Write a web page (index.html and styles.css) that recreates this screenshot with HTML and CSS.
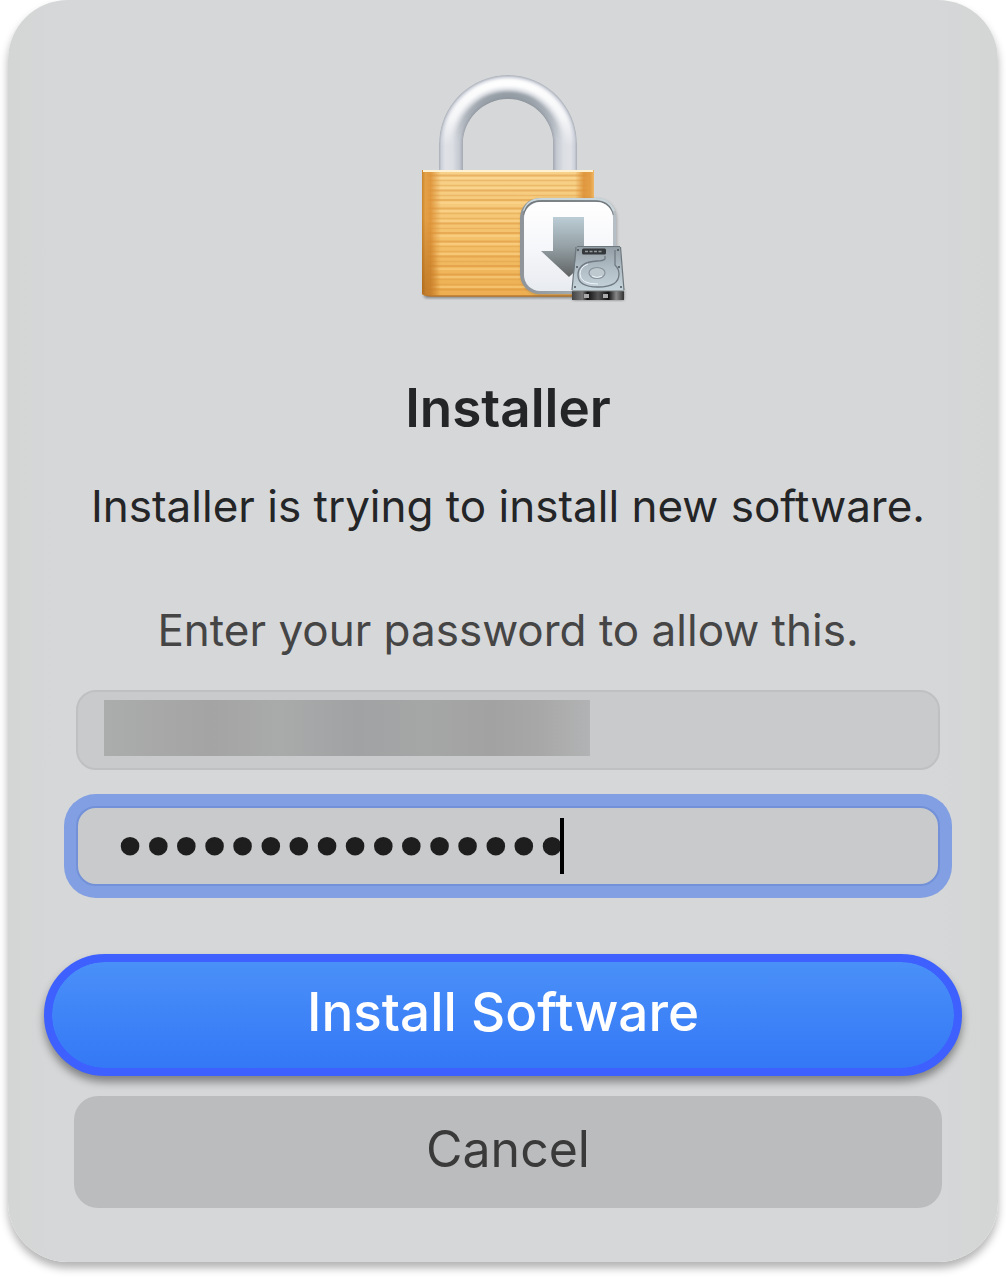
FILE: index.html
```html
<!DOCTYPE html>
<html lang="en">
<head>
  <meta charset="UTF-8">
  <meta name="viewport" content="width=device-width, initial-scale=1.0">
  <title>Installer</title>
  <link rel="stylesheet" href="styles.css">
</head>
<body>
  <form class="dialog">
    <div class="dialog-header">
      <svg class="lock-icon" viewBox="383 60 250 250" aria-hidden="true">
        <defs>
          <radialGradient id="arch" gradientUnits="userSpaceOnUse" cx="508" cy="144" r="69">
            <stop offset="0.652" stop-color="#a4a9b1"/>
            <stop offset="0.7" stop-color="#c3c8d0"/>
            <stop offset="0.8" stop-color="#dbdee3"/>
            <stop offset="0.91" stop-color="#dfe1e7"/>
            <stop offset="0.965" stop-color="#cdd1da"/>
            <stop offset="1" stop-color="#a9aeb7"/>
          </radialGradient>
          <linearGradient id="leg-left" x1="1" x2="0">
            <stop offset="0" stop-color="#a4a9b1"/>
            <stop offset="0.14" stop-color="#c3c8d0"/>
            <stop offset="0.43" stop-color="#dbdee3"/>
            <stop offset="0.74" stop-color="#dfe1e7"/>
            <stop offset="0.9" stop-color="#cdd1da"/>
            <stop offset="1" stop-color="#a9aeb7"/>
          </linearGradient>
          <linearGradient id="leg-right">
            <stop offset="0" stop-color="#a4a9b1"/>
            <stop offset="0.14" stop-color="#c3c8d0"/>
            <stop offset="0.43" stop-color="#dbdee3"/>
            <stop offset="0.74" stop-color="#dfe1e7"/>
            <stop offset="0.9" stop-color="#cdd1da"/>
            <stop offset="1" stop-color="#a9aeb7"/>
          </linearGradient>
          <linearGradient id="arch-shade" gradientUnits="userSpaceOnUse" x1="0" y1="92" x2="0" y2="140">
            <stop offset="0" stop-color="#7f8890" stop-opacity="0.75"/>
            <stop offset="1" stop-color="#7f8890" stop-opacity="0"/>
          </linearGradient>
          <linearGradient id="arch-shine" gradientUnits="userSpaceOnUse" x1="0" y1="78" x2="0" y2="146">
            <stop offset="0" stop-color="#fff"/>
            <stop offset="0.6" stop-color="#fff" stop-opacity="0.7"/>
            <stop offset="1" stop-color="#fff" stop-opacity="0"/>
          </linearGradient>
          <clipPath id="shackle">
            <path d="M439 170v-26a69 69 0 0 1 138 0v26h-24v-26a45 45 0 0 0-90 0v26z"/>
          </clipPath>
          <linearGradient id="brass" x1="0" y1="0" x2="0" y2="1">
            <stop offset="0" stop-color="#f7d28b"/>
            <stop offset="0.5" stop-color="#f5c36e"/>
            <stop offset="1" stop-color="#edae50"/>
          </linearGradient>
          <linearGradient id="brass-edge">
            <stop offset="0" stop-color="#c9842c"/>
            <stop offset="0.02" stop-color="#e4a047"/>
            <stop offset="0.05" stop-color="#dc8f34" stop-opacity="0.85"/>
            <stop offset="0.11" stop-color="#dc8f34" stop-opacity="0"/>
            <stop offset="0.89" stop-color="#dc8f34" stop-opacity="0"/>
            <stop offset="0.94" stop-color="#dc8f34" stop-opacity="0.85"/>
            <stop offset="0.98" stop-color="#e4a047"/>
            <stop offset="1" stop-color="#efb869"/>
          </linearGradient>
          <radialGradient id="brass-dark" gradientUnits="userSpaceOnUse" cx="0" cy="0" r="1" gradientTransform="translate(422 296) scale(18 80)">
            <stop offset="0" stop-color="#a05a10" stop-opacity="0.6"/>
            <stop offset="1" stop-color="#a05a10" stop-opacity="0"/>
          </radialGradient>
          <pattern id="brushed" patternUnits="userSpaceOnUse" x="0" y="172" width="200" height="33">
            <path d="M0 3.500H200M0 18.500H200M0 28H200" stroke="#d78f36" stroke-opacity="0.45" stroke-width="2"/>
            <path d="M0 8.500H200M0 13.500H200M0 23.500H200" stroke="#dd9840" stroke-opacity="0.4" stroke-width="1.500"/>
            <path d="M0 6H200M0 16H200M0 31H200" stroke="#ffe0a0" stroke-opacity="0.45" stroke-width="1.500"/>
          </pattern>
          <linearGradient id="tile" x1="0" y1="0" x2="0" y2="1">
            <stop offset="0" stop-color="#fff"/>
            <stop offset="0.5" stop-color="#f6f7fa"/>
            <stop offset="1" stop-color="#e8ebf0"/>
          </linearGradient>
          <linearGradient id="tile-rim" x1="0" y1="0" x2="1" y2="0">
            <stop offset="0" stop-color="#8e9499"/>
            <stop offset="0.5" stop-color="#a0a8ad"/>
            <stop offset="1" stop-color="#b5bfc5"/>
          </linearGradient>
          <linearGradient id="arrow" x1="0" y1="0" x2="0" y2="1">
            <stop offset="0" stop-color="#bccdd5"/>
            <stop offset="0.5" stop-color="#94a0a5"/>
            <stop offset="1" stop-color="#5f6262"/>
          </linearGradient>
          <linearGradient id="plate" x1="0" y1="0" x2="0" y2="1">
            <stop offset="0" stop-color="#919ba2"/>
            <stop offset="0.4" stop-color="#b0bcc4"/>
            <stop offset="1" stop-color="#cfdee6"/>
          </linearGradient>
          <linearGradient id="drive-front">
            <stop offset="0" stop-color="#444"/>
            <stop offset="0.2" stop-color="#777"/>
            <stop offset="0.3" stop-color="#111"/>
            <stop offset="0.5" stop-color="#555"/>
            <stop offset="0.7" stop-color="#111"/>
            <stop offset="0.85" stop-color="#888"/>
            <stop offset="1" stop-color="#333"/>
          </linearGradient>
          <filter id="soft" x="-20%" y="-20%" width="140%" height="140%">
            <feGaussianBlur stdDeviation="1.500"/>
          </filter>
        </defs>

        <!-- shackle -->
        <g clip-path="url(#shackle)">
          <path d="M439 144a69 69 0 0 1 138 0h-24a45 45 0 0 0-90 0z" fill="url(#arch)"/>
          <rect x="439" y="143" width="24" height="27" fill="url(#leg-left)"/>
          <rect x="553" y="143" width="24" height="27" fill="url(#leg-right)"/>
          <path d="M460 144a48 48 0 0 1 96 0" fill="none" stroke="url(#arch-shade)" stroke-width="9" filter="url(#soft)"/>
          <path d="M447 144a61 61 0 0 1 122 0" fill="none" stroke="url(#arch-shine)" stroke-width="9" filter="url(#soft)"/>
        </g>

        <!-- body -->
        <rect x="424" y="290" width="170" height="8" rx="3" fill="#555" opacity="0.7" filter="url(#soft)"/>
        <path d="M422 170h172v123q0 3-6 3H430q-8 0-8-3z" fill="url(#brass)"/>
        <path d="M422 173h172v120H422z" fill="url(#brushed)"/>
        <path d="M422 170h172v123q0 3-6 3H430q-8 0-8-3z" fill="url(#brass-edge)"/>
        <path d="M422 210h20v86h-12q-8 0-8-3z" fill="url(#brass-dark)"/>
        <path d="M423 294q3 2 8 2h157q4 0 6-2" fill="none" stroke="#b97a2d" stroke-width="1.500"/>
        <path d="M423 171h170" stroke="#fff2d2" stroke-width="2"/>

        <!-- installer badge -->
        <rect x="521" y="199" width="96" height="96" rx="20" fill="#555" opacity="0.35" filter="url(#soft)"/>
        <rect x="520" y="198" width="96" height="96" rx="20" fill="url(#tile-rim)"/>
        <path d="M524 211q4-12 17-12h55q13 0 18 12" fill="none" stroke="#c9d6dc" stroke-width="2"/>
        <path d="M524 215q2-14 17-14h54q15 0 18 14" fill="none" stroke="#72797d" stroke-width="1.500"/>
        <rect x="524" y="202" width="89" height="89" rx="16" fill="url(#tile)"/>
        <path d="M553 217h31v34h12l-27 26-28-26h12z" fill="url(#arrow)"/>

        <!-- drive -->
        <path d="M573 290h51v10h-51z" fill="#333" opacity="0.6" filter="url(#soft)"/>
        <path d="M577 246h43l4 44v10h-52v-10z" fill="url(#plate)"/>
        <path d="M577 246.500h43M576 247l-4 43M620.500 247l3.500 43" fill="none" stroke="#6d777e" stroke-width="1.200"/>
        <path d="M572 291h52v9h-52z" fill="url(#drive-front)"/>
        <path d="M572 291h52" stroke="#75797b"/>
        <path d="M584 294h5v4h-5zM603 294h5v4h-5z" fill="#aaa"/>
        <rect x="582" y="248.500" width="24" height="6" rx="1.500" fill="#34383a"/>
        <path d="M585 251.500h17" stroke="#929a9e" stroke-width="1.500" stroke-dasharray="3 1.500"/>
        <path d="M605 256v3q-2 2-8 2-19 1-19 14 0 12 20 12 21 0 21-13 0-5-4-9V250" fill="none" stroke="#707a82" stroke-width="1.300"/>
        <path d="M588 264q-8 3-8 10 0 10 18 10" fill="none" stroke="#edf5fa" stroke-width="1"/>
        <ellipse cx="597" cy="273" rx="8" ry="5.500" fill="#bdc8cf" stroke="#87929a" stroke-width="1.200"/>
        <path d="M592 276q5 3 10 0" fill="none" stroke="#eaf2f6"/>
        <g fill="#4b5358">
          <circle cx="578" cy="250" r="1"/>
          <circle cx="618" cy="250" r="1"/>
          <circle cx="577" cy="267" r="1"/>
          <circle cx="619" cy="267" r="1"/>
          <circle cx="575" cy="287" r="1"/>
          <circle cx="621" cy="287" r="1"/>
        </g>
      </svg>
      <h1 class="dialog-title">Installer</h1>
      <p class="dialog-message">Installer is trying to install new software.</p>
      <p class="dialog-hint">Enter your password to allow this.</p>
    </div>

    <div class="fields">
      <div class="field">
        <input class="field-input" type="text" aria-label="User name" readonly>
        <span class="redacted"></span>
      </div>
      <div class="field">
        <input class="field-input field-input-active" type="password" aria-label="Password" value="abcdefghijklmnop">
        <span class="caret"></span>
      </div>
    </div>

    <div class="actions">
      <button class="button button-primary" type="submit">Install Software</button>
      <button class="button button-secondary" type="button">Cancel</button>
    </div>
  </form>
</body>
</html>
```
FILE: styles.css
```css
:root {
  --dialog-bg: #d6d7d9;
  --field-bg: #c9cacb;
  --field-border: #bfc0c1;
  --focus-ring: #819fe2;
  --focus-border: #7391d8;
  --primary-border: #3e60ff;
  --text: #242527;
  --text-muted: #454545;
}

* {
  box-sizing: border-box;
  margin: 0;
  padding: 0;
}

body {
  font-family: Inter, "Liberation Sans", sans-serif;
  background-color: #fff;
  color: var(--text);
}

.dialog {
  margin: 0 8px 16px;
  padding: 60px 36px 54px;
  border-radius: 60px;
  background: linear-gradient(90deg, #d4d6d5, var(--dialog-bg) 6%, var(--dialog-bg) 92%, #d4d6d5);
  box-shadow: 0 6px 8px rgba(0, 0, 0, 0.3);
}

.dialog-header {
  display: flex;
  flex-direction: column;
  align-items: center;
  padding: 0 20px 0 30px;
  text-align: center;
}

.lock-icon {
  width: 250px;
  height: 250px;
}

.dialog-title {
  margin-top: 66px;
  font-size: 53px;
  font-weight: 600;
  line-height: 64px;
}

.dialog-message,
.dialog-hint {
  font-size: 44px;
  line-height: 56px;
}

.dialog-message {
  margin-top: 38px;
}

.dialog-hint {
  margin-top: 68px;
  color: var(--text-muted);
}

.fields {
  display: flex;
  flex-direction: column;
  gap: 36px;
  margin: 32px 22px 0 32px;
}

.field {
  position: relative;
}

.field-input {
  display: block;
  width: 100%;
  height: 80px;
  padding: 0 36px 6px;
  border: 2px solid var(--field-border);
  border-radius: 20px;
  outline: none;
  background-color: var(--field-bg);
  color: #1e1e1e;
  font-family: inherit;
  font-size: 50px;
}

.field-input-active {
  padding-left: 38px;
  border-color: var(--focus-border);
  box-shadow: 0 0 0 12px var(--focus-ring);
  /* heavier password dots */
  -webkit-text-stroke: 3px #1e1e1e;
}

.redacted {
  position: absolute;
  top: 10px;
  left: 28px;
  width: 486px;
  height: 56px;
  background: linear-gradient(90deg, #abacac, #a4a4a4 22%, #a9aaaa 36%, #a1a2a3 52%, #a5a6a6 66%, #a2a2a2 80%, #a8a8a8 90%, #b2b3b4);
}

.caret {
  position: absolute;
  top: 12px;
  left: 484px;
  width: 4px;
  height: 56px;
  background-color: #000;
}

.actions {
  display: flex;
  flex-direction: column;
  gap: 20px;
  margin-top: 68px;
}

.button {
  padding-bottom: 6px;
  border: none;
  font-family: inherit;
  font-size: 53px;
  cursor: pointer;
}

.button-primary {
  height: 122px;
  border: 8px solid var(--primary-border);
  border-radius: 61px;
  background: linear-gradient(#4a90f8, #3478f6) padding-box, var(--primary-border);
  box-shadow: 0 6px 8px rgba(0, 0, 0, 0.4);
  color: #fff;
  font-weight: 500;
}

.button-secondary {
  height: 112px;
  margin: 0 20px 0 30px;
  border-radius: 24px;
  background-color: #bbbcbe;
  color: #3a3a3a;
  font-size: 50px;
}
```
